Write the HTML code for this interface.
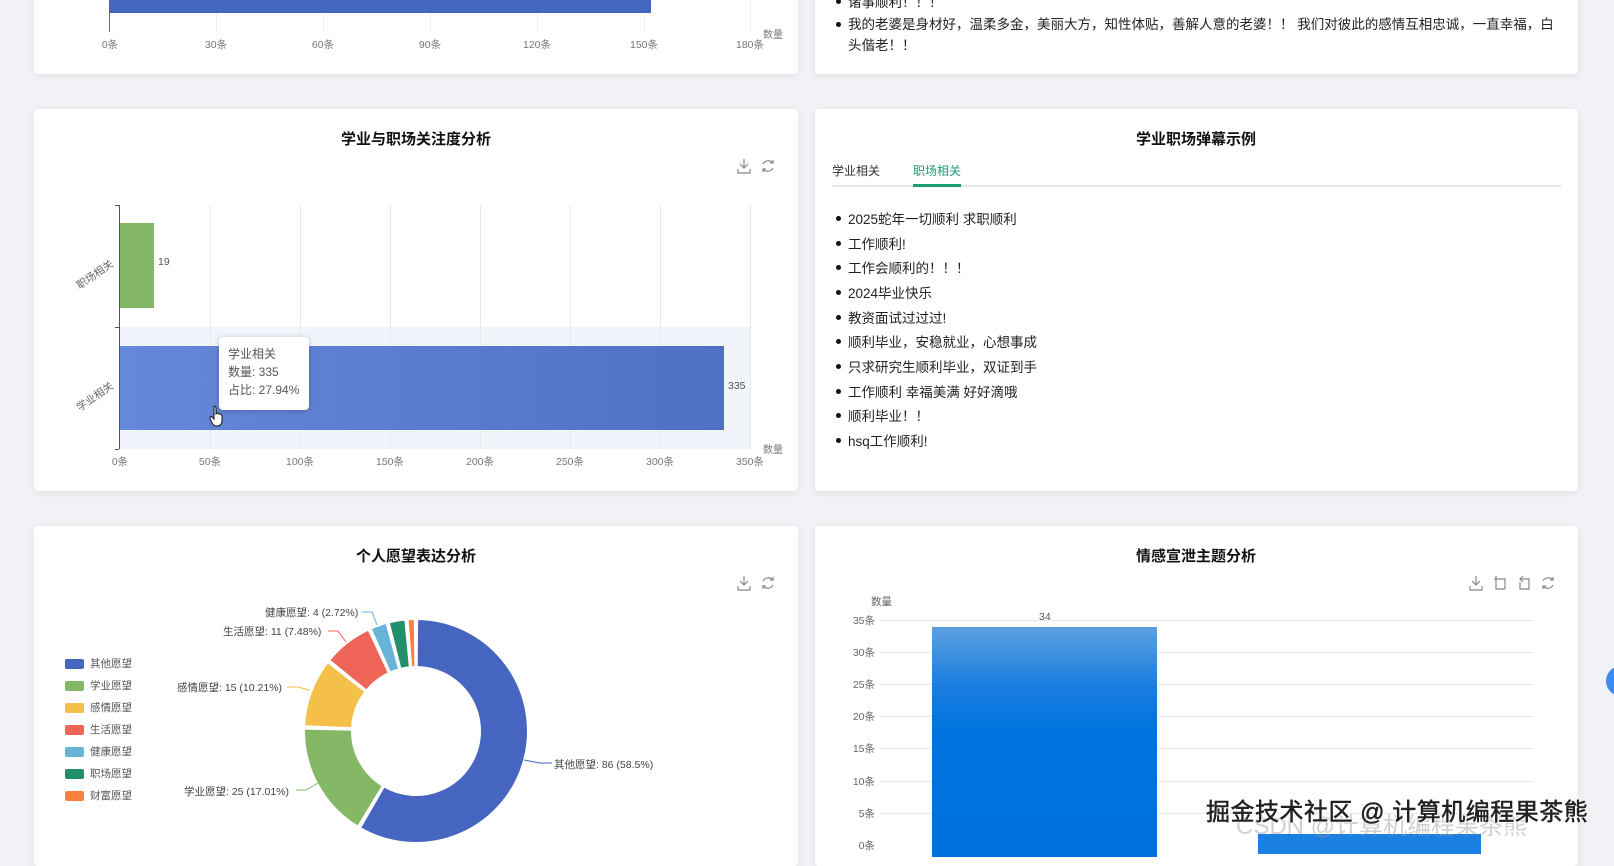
<!DOCTYPE html>
<html><head><meta charset="utf-8"><style>
*{margin:0;padding:0;box-sizing:border-box}
body{width:1614px;height:845px;overflow:hidden;background:#f0f2f5;position:relative;font-family:"Liberation Sans","Noto Sans CJK SC",sans-serif;color:#333}
.card{position:absolute;background:#fff;border-radius:4px;box-shadow:0 2px 8px rgba(0,0,0,.08)}
.a{position:absolute;white-space:nowrap}
.t{position:absolute;font-size:15px;font-weight:bold;color:#111;transform:translateX(-50%)}
.ax{font-size:10.5px;color:#777;transform:translateX(-50%)}
.li{position:absolute;left:848px;font-size:13.5px;color:#222;white-space:nowrap}
.li:before{content:"";position:absolute;left:-12px;top:8px;width:5px;height:5px;border-radius:50%;background:#111}
.gl{position:absolute;background:#e8e8e8}
.lg{position:absolute;left:65px;width:19px;height:10px;border-radius:2px}
.lt{position:absolute;left:90px;font-size:10.5px;color:#555}
.pl{position:absolute;font-size:10.5px;color:#444;white-space:nowrap}
</style></head><body>

<!-- top cards -->
<div class="card" style="left:34px;top:-10px;width:764px;height:84px"></div>
<div class="card" style="left:815px;top:-10px;width:763px;height:84px"></div>
<div class="gl" style="left:216px;top:0;width:1px;height:32px;background:#eee"></div>
<div class="gl" style="left:323px;top:0;width:1px;height:32px;background:#eee"></div>
<div class="gl" style="left:430px;top:0;width:1px;height:32px;background:#eee"></div>
<div class="gl" style="left:537px;top:0;width:1px;height:32px;background:#eee"></div>
<div class="gl" style="left:644px;top:0;width:1px;height:32px;background:#eee"></div>
<div class="gl" style="left:750px;top:0;width:1px;height:32px;background:#eee"></div>
<div class="a" style="left:110px;top:0;width:541px;height:13px;background:#4566c0"></div>
<div class="a" style="left:109px;top:0;width:1px;height:32px;background:#666"></div>
<div class="a ax" style="left:110px;top:37px">0条</div>
<div class="a ax" style="left:216px;top:37px">30条</div>
<div class="a ax" style="left:323px;top:37px">60条</div>
<div class="a ax" style="left:430px;top:37px">90条</div>
<div class="a ax" style="left:537px;top:37px">120条</div>
<div class="a ax" style="left:644px;top:37px">150条</div>
<div class="a ax" style="left:750px;top:37px">180条</div>
<div class="a" style="left:763px;top:26px;font-size:10px;color:#777">数量</div>
<div class="li" style="top:-9px">诸事顺利！！！</div>
<div class="li" style="top:14px;white-space:normal;width:710px;line-height:21px">我的老婆是身材好，温柔多金，美丽大方，知性体贴，善解人意的老婆！！ 我们对彼此的感情互相忠诚，一直幸福，白头偕老！！</div>

<!-- row 2 left -->
<div class="card" style="left:34px;top:109px;width:764px;height:382px"></div>
<div class="t" style="left:416px;top:128px">学业与职场关注度分析</div>
<svg class="a" style="left:736px;top:157px" width="44" height="18" viewBox="0 0 44 18" fill="none" stroke="#888" stroke-width="1.2"><path d="M8 2v9M4 7l4 4 4-4M2 12v4h12v-4"/><path d="M37 6a6 6 0 0 0-10 1M37 3v3h-3M27 12a6 6 0 0 0 10-1M27 15v-3h3"/></svg>
<div class="a" style="left:120px;top:327px;width:630px;height:122px;background:#f1f4fa"></div>
<div class="gl" style="left:210px;top:205px;width:1px;height:244px"></div>
<div class="gl" style="left:300px;top:205px;width:1px;height:244px"></div>
<div class="gl" style="left:390px;top:205px;width:1px;height:244px"></div>
<div class="gl" style="left:480px;top:205px;width:1px;height:244px"></div>
<div class="gl" style="left:570px;top:205px;width:1px;height:244px"></div>
<div class="gl" style="left:660px;top:205px;width:1px;height:244px"></div>
<div class="gl" style="left:750px;top:205px;width:1px;height:244px"></div>
<div class="a" style="left:119px;top:205px;width:1px;height:244px;background:#555"></div>
<div class="a" style="left:115px;top:205px;width:4px;height:1px;background:#555"></div>
<div class="a" style="left:115px;top:327px;width:4px;height:1px;background:#555"></div>
<div class="a" style="left:115px;top:449px;width:4px;height:1px;background:#555"></div>
<div class="a" style="left:120px;top:223px;width:34px;height:85px;background:#85b866"></div>
<div class="a" style="left:120px;top:346px;width:604px;height:84px;background:linear-gradient(90deg,#6688d8,#5070c5)"></div>
<div class="a" style="left:158px;top:256px;font-size:10.5px;color:#555">19</div>
<div class="a" style="left:728px;top:380px;font-size:10.5px;color:#555">335</div>
<div class="a" style="left:74px;top:267px;font-size:10.5px;color:#666;transform:rotate(-35deg)">职场相关</div>
<div class="a" style="left:74px;top:389px;font-size:10.5px;color:#666;transform:rotate(-35deg)">学业相关</div>
<div class="a ax" style="left:120px;top:454px">0条</div>
<div class="a ax" style="left:210px;top:454px">50条</div>
<div class="a ax" style="left:300px;top:454px">100条</div>
<div class="a ax" style="left:390px;top:454px">150条</div>
<div class="a ax" style="left:480px;top:454px">200条</div>
<div class="a ax" style="left:570px;top:454px">250条</div>
<div class="a ax" style="left:660px;top:454px">300条</div>
<div class="a ax" style="left:750px;top:454px">350条</div>
<div class="a" style="left:763px;top:441px;font-size:10px;color:#777">数量</div>
<div class="a" style="left:219px;top:337px;width:90px;height:73px;background:#fff;border-radius:4px;box-shadow:0 1px 6px rgba(0,0,0,.2);font-size:12px;color:#555;line-height:18px;padding:8px 9px">学业相关<br>数量: 335<br>占比: 27.94%</div>
<svg class="a" style="left:209px;top:405px" width="16" height="22" viewBox="0 0 16 22"><path d="M5 1c1 0 2 1 2 2v6l1-1c1 0 2 1 2 1l1 0c1 0 2 1 2 2v5c0 3-2 5-5 5H7c-2 0-3-2-4-3L1 13c0-1 1-2 2-1l2 2V3c0-1 0-2 0-2z" fill="#fff" stroke="#111" stroke-width="1"/></svg>

<!-- row 2 right -->
<div class="card" style="left:815px;top:109px;width:763px;height:382px"></div>
<div class="t" style="left:1196px;top:128px">学业职场弹幕示例</div>
<div class="a" style="left:832px;top:162px;font-size:12px;color:#333">学业相关</div>
<div class="a" style="left:913px;top:162px;font-size:12px;color:#1a9e74">职场相关</div>
<div class="a" style="left:832px;top:185px;width:729px;height:2px;background:#e4e7ed"></div>
<div class="a" style="left:913px;top:184px;width:48px;height:3px;background:#1a9e74"></div>
<div class="li" style="top:208px">2025蛇年一切顺利 求职顺利</div>
<div class="li" style="top:233px">工作顺利!</div>
<div class="li" style="top:257px">工作会顺利的！！！</div>
<div class="li" style="top:282px">2024毕业快乐</div>
<div class="li" style="top:307px">教资面试过过过!</div>
<div class="li" style="top:331px">顺利毕业，安稳就业，心想事成</div>
<div class="li" style="top:356px">只求研究生顺利毕业，双证到手</div>
<div class="li" style="top:381px">工作顺利 幸福美满 好好滴哦</div>
<div class="li" style="top:405px">顺利毕业！！</div>
<div class="li" style="top:430px">hsq工作顺利!</div>

<!-- row 3 left -->
<div class="card" style="left:34px;top:526px;width:764px;height:340px"></div>
<div class="t" style="left:416px;top:545px">个人愿望表达分析</div>
<svg class="a" style="left:736px;top:574px" width="44" height="18" viewBox="0 0 44 18" fill="none" stroke="#888" stroke-width="1.2"><path d="M8 2v9M4 7l4 4 4-4M2 12v4h12v-4"/><path d="M37 6a6 6 0 0 0-10 1M37 3v3h-3M27 12a6 6 0 0 0 10-1M27 15v-3h3"/></svg>
<div class="lg" style="top:659px;background:#4565c0"></div><div class="lt" style="top:656px">其他愿望</div>
<div class="lg" style="top:681px;background:#85b866"></div><div class="lt" style="top:678px">学业愿望</div>
<div class="lg" style="top:703px;background:#f5c04a"></div><div class="lt" style="top:700px">感情愿望</div>
<div class="lg" style="top:725px;background:#ee6457"></div><div class="lt" style="top:722px">生活愿望</div>
<div class="lg" style="top:747px;background:#67b3d9"></div><div class="lt" style="top:744px">健康愿望</div>
<div class="lg" style="top:769px;background:#21906a"></div><div class="lt" style="top:766px">职场愿望</div>
<div class="lg" style="top:791px;background:#fb8040"></div><div class="lt" style="top:788px">财富愿望</div>
<svg id="donut" class="a" style="left:0;top:0" width="800" height="845"></svg>
<div class="pl" style="left:265px;top:605px">健康愿望: 4 (2.72%)</div>
<div class="pl" style="left:223px;top:624px">生活愿望: 11 (7.48%)</div>
<div class="pl" style="left:177px;top:680px">感情愿望: 15 (10.21%)</div>
<div class="pl" style="left:184px;top:784px">学业愿望: 25 (17.01%)</div>
<div class="pl" style="left:554px;top:757px">其他愿望: 86 (58.5%)</div>

<!-- row 3 right -->
<div class="card" style="left:815px;top:526px;width:763px;height:340px"></div>
<div class="t" style="left:1196px;top:545px">情感宣泄主题分析</div>
<svg class="a" style="left:1468px;top:574px" width="90" height="18" viewBox="0 0 90 18" fill="none" stroke="#888" stroke-width="1.2"><path d="M8 2v9M4 7l4 4 4-4M2 12v4h12v-4"/><path d="M28 2v3h-2M28 5h9v10M28 5v10h9"/><path d="M52 5h9v10h-9V8M55 2l-3 3 3 3"/><path d="M85 6a6 6 0 0 0-10 1M85 3v3h-3M75 12a6 6 0 0 0 10-1M75 15v-3h3"/></svg>
<div class="a" style="left:871px;top:594px;font-size:10.5px;color:#666">数量</div>
<div class="gl" style="left:880px;top:620px;width:653px;height:1px"></div>
<div class="gl" style="left:880px;top:652px;width:653px;height:1px"></div>
<div class="gl" style="left:880px;top:684px;width:653px;height:1px"></div>
<div class="gl" style="left:880px;top:716px;width:653px;height:1px"></div>
<div class="gl" style="left:880px;top:748px;width:653px;height:1px"></div>
<div class="gl" style="left:880px;top:781px;width:653px;height:1px"></div>
<div class="gl" style="left:880px;top:813px;width:653px;height:1px"></div>
<div class="a" style="right:739px;top:613px;font-size:10.5px;color:#666">35条</div>
<div class="a" style="right:739px;top:645px;font-size:10.5px;color:#666">30条</div>
<div class="a" style="right:739px;top:677px;font-size:10.5px;color:#666">25条</div>
<div class="a" style="right:739px;top:709px;font-size:10.5px;color:#666">20条</div>
<div class="a" style="right:739px;top:741px;font-size:10.5px;color:#666">15条</div>
<div class="a" style="right:739px;top:774px;font-size:10.5px;color:#666">10条</div>
<div class="a" style="right:739px;top:806px;font-size:10.5px;color:#666">5条</div>
<div class="a" style="right:739px;top:838px;font-size:10.5px;color:#666">0条</div>
<div class="a" style="left:932px;top:627px;width:225px;height:230px;background:linear-gradient(180deg,#5da0e0 0%,#1b7ee0 25%,#0073de 45%,#0070dc 100%)"></div>
<div class="a" style="left:1039px;top:611px;font-size:10.5px;color:#555">34</div>
<div class="a" style="left:1258px;top:834px;width:223px;height:20px;background:#1a7fe0"></div>
<div class="a" style="left:1606px;top:666px;width:30px;height:30px;border-radius:50%;background:#3d8af0"></div>
<div class="a" style="left:1236px;top:806px;font-size:24px;color:rgba(150,150,150,.45)">CSDN @计算机编程果茶熊</div>
<div class="a" style="left:1206px;top:792px;font-size:24px;color:#222;letter-spacing:0.5px;-webkit-text-stroke:0.5px #222;text-shadow:0 0 2px #fff,0 0 2px #fff,1px 1px 0 #fff,-1px -1px 0 #fff">掘金技术社区 @ 计算机编程果茶熊</div>

<script>
(function(){
var cx=416,cy=731,R=112,r=64;
var d=[[86,'#4565c0'],[25,'#85b866'],[15,'#f5c04a'],[11,'#ee6457'],[4,'#67b3d9'],[4,'#21906a'],[2,'#fb8040']];
var tot=147,a=0,s='';
function pt(rad,ang){var t=(ang-90)*Math.PI/180;return [cx+rad*Math.cos(t),cy+rad*Math.sin(t)];}
d.forEach(function(x){
 var sw=x[0]/tot*360,a0=a+0.6,a1=a+sw-0.6;a+=sw;
 var p1=pt(R,a0),p2=pt(R,a1),p3=pt(r,a1),p4=pt(r,a0),lg=(a1-a0)>180?1:0;
 s+='<path d="M'+p1+'A'+R+' '+R+' 0 '+lg+' 1 '+p2+'L'+p3+'A'+r+' '+r+' 0 '+lg+' 0 '+p4+'Z" fill="'+x[1]+'" stroke="#fff" stroke-width="2" stroke-linejoin="round"/>';
});
s+='<polyline points="524,760 540,763 552,763" fill="none" stroke="#4565c0"/>';
s+='<polyline points="320,782 306,790 296,790" fill="none" stroke="#85b866"/>';
s+='<polyline points="310,690 297,687 287,687" fill="none" stroke="#f5c04a"/>';
s+='<polyline points="346,642 338,631 328,631" fill="none" stroke="#ee6457"/>';
s+='<polyline points="377,625 372,612 362,612" fill="none" stroke="#67b3d9"/>';
document.getElementById('donut').innerHTML=s;
})();
</script>
</body></html>
